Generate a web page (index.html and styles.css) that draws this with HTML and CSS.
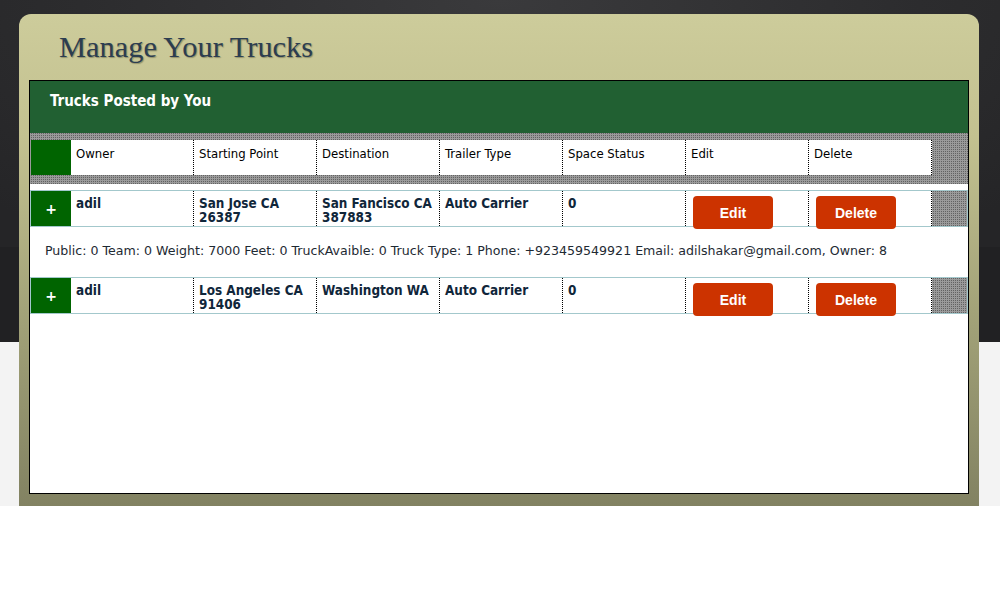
FILE: index.html
```html
<!DOCTYPE html>
<html>
<head>
<meta charset="utf-8">
<title>Manage Your Trucks</title>
<link rel="stylesheet" href="styles.css">
</head>
<body>
<div class="page">
  <div class="panel">
    <h1 class="title">Manage Your Trucks</h1>
    <div class="box">
      <div class="box-head">Trucks Posted by You</div>
      <div class="thead">
        <div class="trow hrow">
          <div class="tog"></div>
          <div class="hcell">Owner</div>
          <div class="hcell">Starting Point</div>
          <div class="hcell">Destination</div>
          <div class="hcell">Trailer Type</div>
          <div class="hcell">Space Status</div>
          <div class="hcell">Edit</div>
          <div class="hcell">Delete</div>
        </div>
      </div>
      <div class="gap"></div>
      <div class="trow drow">
        <div class="tog">+</div>
        <div class="dcell">adil</div>
        <div class="dcell">San Jose CA 26387</div>
        <div class="dcell">San Fancisco CA 387883</div>
        <div class="dcell">Auto Carrier</div>
        <div class="dcell">0</div>
        <div class="dcell btn-cell"><button class="btn">Edit</button></div>
        <div class="dcell btn-cell"><button class="btn">Delete</button></div>
        <div class="fill"></div>
      </div>
      <div class="detail">Public: 0 Team: 0 Weight: 7000 Feet: 0 TruckAvaible: 0 Truck Type: 1 Phone: +923459549921 Email: adilshakar@gmail.com, Owner: 8</div>
      <div class="trow drow">
        <div class="tog">+</div>
        <div class="dcell">adil</div>
        <div class="dcell">Los Angeles CA 91406</div>
        <div class="dcell">Washington WA</div>
        <div class="dcell">Auto Carrier</div>
        <div class="dcell">0</div>
        <div class="dcell btn-cell"><button class="btn">Edit</button></div>
        <div class="dcell btn-cell"><button class="btn">Delete</button></div>
        <div class="fill"></div>
      </div>
    </div>
  </div>
</div>
</body>
</html>
```
FILE: styles.css
```css
html, body {
  margin: 0;
  padding: 0;
  background: #ffffff;
}

.page {
  height: 506px;
  padding-top: 14px;
  box-sizing: border-box;
  background:
    radial-gradient(ellipse 70% 120% at 50% 0, #3a3a3c 0, #2c2c2e 60%, #252527 100%) 0 0 / 100% 247px no-repeat,
    linear-gradient(#212123, #212123) 0 247px / 100% 95px no-repeat,
    #f3f3f3;
}

.panel {
  margin: 0 21px 0 19px;
  height: 492px;
  box-sizing: border-box;
  padding: 0 10px 12px;
  border-radius: 12px 12px 0 0;
  background: linear-gradient(to bottom, #cdcc9b 0%, #c3c190 25%, #a3a379 60%, #828262 100%);
  display: flex;
  flex-direction: column;
}

.title {
  margin: 0;
  height: 66px;
  box-sizing: border-box;
  padding: 16px 0 0 30px;
  font-family: "Liberation Serif", "Times New Roman", serif;
  font-weight: normal;
  font-size: 30.4px;
  line-height: 34px;
  color: #2c3d50;
  text-shadow: 1px 1px 1px rgba(40, 40, 20, 0.35);
}

.box {
  flex: 1;
  background: #ffffff;
  border: 1px solid #000000;
}

.box-head {
  height: 52px;
  box-sizing: border-box;
  padding: 11px 0 0 20px;
  background: #216032;
  color: #ffffff;
  font-family: "DejaVu Sans Condensed", "DejaVu Sans", sans-serif;
  font-weight: bold;
  font-size: 15px;
  line-height: 18px;
}

.thead {
  padding: 7px 0 9px 1px;
  background-color: #9a9a9a;
  background-image: conic-gradient(#626262 0 25%, transparent 0 100%);
  background-size: 2px 2px;
}

.trow {
  display: grid;
  grid-template-columns: 40px repeat(7, 123px) 1fr;
  grid-template-rows: 35px;
}

.hrow {
  grid-template-columns: 40px repeat(7, 123px);
}

.tog {
  background: #006400;
  color: #ffffff;
  font-family: "DejaVu Sans", sans-serif;
  font-weight: bold;
  font-size: 14px;
  display: flex;
  align-items: center;
  justify-content: center;
}

.hcell {
  background: #ffffff;
  border-right: 1px dotted #000000;
  padding: 7px 5px 0;
  font-family: "DejaVu Sans Condensed", "DejaVu Sans", sans-serif;
  font-size: 13px;
  line-height: 14px;
  color: #000000;
}

.gap {
  height: 6px;
}

.drow {
  border: 1px solid #a3c8cc;
}

.dcell {
  background: #ffffff;
  border-right: 1px dotted #000000;
  padding: 6px 5px 0;
  font-family: "DejaVu Sans Condensed", "DejaVu Sans", sans-serif;
  font-weight: bold;
  font-size: 13.4px;
  line-height: 14px;
  color: #10263a;
  overflow: visible;
}

.btn-cell {
  padding: 5px 0 0 7px;
}

.btn {
  display: block;
  width: 80px;
  height: 33px;
  margin: 0;
  padding: 0;
  border: none;
  border-radius: 4px;
  background: #cc3300;
  color: #ffffff;
  font-family: "Liberation Sans", Arial, sans-serif;
  font-weight: bold;
  font-size: 14px;
}

.fill {
  background-color: #9a9a9a;
  background-image: conic-gradient(#626262 0 25%, transparent 0 100%);
  background-size: 2px 2px;
}

.detail {
  height: 50px;
  box-sizing: border-box;
  padding: 0 0 3px 15px;
  display: flex;
  align-items: center;
  font-family: "DejaVu Sans", sans-serif;
  font-size: 12.6px;
  color: #1e2a33;
}
```
